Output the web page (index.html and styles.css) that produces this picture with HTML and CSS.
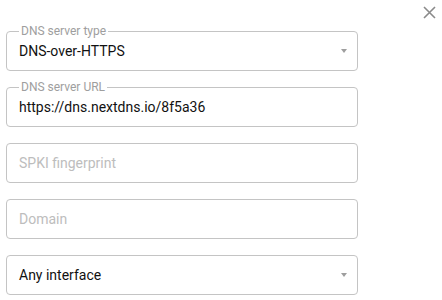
FILE: index.html
```html
<!DOCTYPE html>
<html lang="en">
<head>
  <meta charset="UTF-8" />
  <title>DNS server</title>
  <link rel="stylesheet" href="styles.css">
</head>
<body>
  <div class="dialog">
    <div class="dialog-head">
      <button class="close" aria-label="Close">
        <svg width="13" height="13" viewBox="0 0 13 13">
          <path d="M1 1 L12 12 M12 1 L1 12" stroke="#8a8a8a" stroke-width="1.6" fill="none"/>
        </svg>
      </button>
    </div>

    <div class="fields">
      <div class="field select">
        <span class="label">DNS server type</span>
        <span class="value">DNS-over-HTTPS</span>
        <span class="arrow"></span>
      </div>

      <div class="field">
        <span class="label">DNS server URL</span>
        <span class="value">https://dns.nextdns.io/8f5a36</span>
      </div>

      <div class="field">
        <span class="value placeholder">SPKI fingerprint</span>
      </div>

      <div class="field">
        <span class="value placeholder">Domain</span>
      </div>

      <div class="field select">
        <span class="value">Any interface</span>
        <span class="arrow"></span>
      </div>
    </div>
  </div>
</body>
</html>
```

FILE: styles.css
```css
body {
  margin: 0;
  background-color: #ffffff;
  font-family: Roboto, 'Liberation Sans', sans-serif;
  color: #111111;
}

.dialog {
  width: 442px;
  display: flex;
  flex-direction: column;
}

.dialog-head {
  height: 31px;
  display: flex;
  justify-content: flex-end;
}

.close {
  width: 25px;
  height: 24px;
  margin-right: 0;
  padding: 0;
  border: none;
  background: none;
  display: flex;
  align-items: center;
  justify-content: center;
}

.fields {
  display: flex;
  flex-direction: column;
  gap: 16px;
  padding-left: 6px;
}

.field {
  position: relative;
  box-sizing: border-box;
  width: 352px;
  height: 40px;
  border: 1px solid #c4c4c4;
  border-radius: 4px;
  display: flex;
  align-items: center;
  padding: 0 10px 0 12px;
}

.label {
  position: absolute;
  top: -8px;
  left: 12px;
  padding: 0 2px;
  background-color: #ffffff;
  font-size: 12px;
  line-height: 14px;
  color: #9e9e9e;
}

.value {
  flex: 1;
  font-size: 14px;
  white-space: nowrap;
}

.placeholder {
  color: #bdbdbd;
}

.arrow {
  width: 0;
  height: 0;
  border-left: 3px solid transparent;
  border-right: 3px solid transparent;
  border-top: 4px solid #9e9e9e;
}
```
